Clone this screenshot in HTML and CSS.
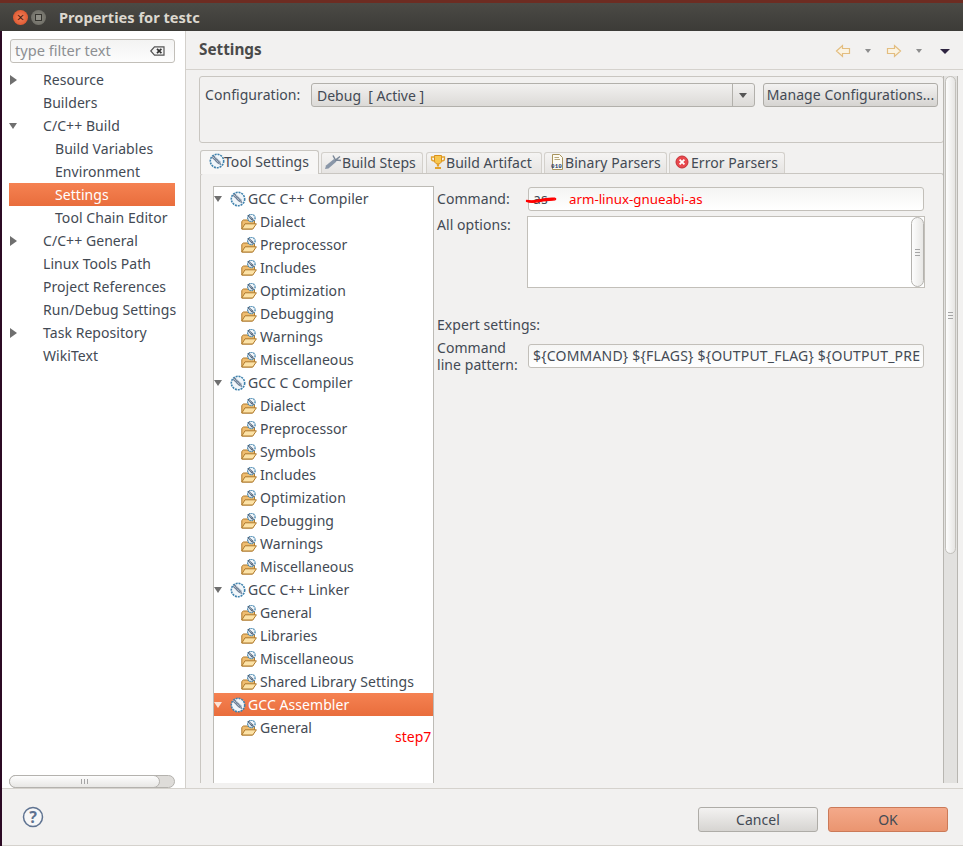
FILE: index.html
```html
<!DOCTYPE html>
<html lang="en">
<head>
<meta charset="utf-8">
<title>Properties for testc</title>
<link rel="stylesheet" href="styles.css">
</head>
<body>
<svg class="defs" width="0" height="0" aria-hidden="true">
  <symbol id="tool" viewBox="0 0 16 16">
    <circle cx="8" cy="8" r="6.7" fill="#f1f6fa"/>
    <circle cx="8" cy="8" r="6.7" fill="none" stroke="#3f82ad" stroke-width="1.6" stroke-dasharray="2 .9"/>
    <path d="M3.6 3.4 L5 2.6 L11 8.2 L12.4 12.2 L8.4 10.6 L3 5Z" fill="#6d7f96"/>
    <path d="M4 4 L10.6 10.4M6 3.8 L11 8.6M3.8 6 L8.6 10.6" stroke="#e3ebf2" stroke-width=".9" stroke-dasharray="1 1" fill="none"/>
  </symbol>
  <symbol id="folder" viewBox="0 0 16 16">
    <path d="M.8 15 V7.4 L2.4 6 H6 L13.5 6.6 V10 L11.5 15Z" fill="#efbd70" stroke="#b07a2c" stroke-width="1"/>
    <path d="M.8 15 L4 9.8 H15.4 L11.8 15Z" fill="#fce2a6" stroke="#b07a2c" stroke-width="1"/>
    <circle cx="10.4" cy="4" r="3.7" fill="#f1f6fa"/>
    <circle cx="10.4" cy="4" r="3.7" fill="none" stroke="#3f82ad" stroke-width="1.3" stroke-dasharray="1.4 .7"/>
    <path d="M6.4 1.4 L7.6 .8 L12 4.6 L13 7 L10.4 6.2Z" fill="#4f6279"/>
    <path d="M8 2.2 L11.4 5.4" stroke="#e3ebf2" stroke-width=".8" stroke-dasharray="1 .7" fill="none"/>
  </symbol>
  <symbol id="tip-left" viewBox="0 0 16 14">
    <path d="M1.5 7 L7.5 1.5 V4.5 H14.5 V9.5 H7.5 V12.5Z" fill="#fbf3e2" stroke="#e3bd7f" stroke-width="1.2"/>
  </symbol>
  <symbol id="tip-right" viewBox="0 0 16 14">
    <path d="M14.5 7 L8.5 1.5 V4.5 H1.5 V9.5 H8.5 V12.5Z" fill="#fbf3e2" stroke="#e3bd7f" stroke-width="1.2"/>
  </symbol>
</svg>

<div class="window">
  <header class="titlebar">
    <span class="wbtn close">×</span>
    <span class="wbtn max"><i></i></span>
    <span class="wtitle">Properties for testc</span>
  </header>

  <div class="main">
    <aside class="sidebar">
      <div class="filter">
        <span class="filter-text">type filter text</span>
        <svg class="filter-clear" width="15" height="10" viewBox="0 0 15 10"><path d="M.8 5 L4.5 .8 H14 V9.2 H4.5Z" fill="#f4f4f4" stroke="#555" stroke-width="1.2"/><path d="M7 2.8 L11.4 7.2M11.4 2.8 L7 7.2" stroke="#333" stroke-width="1.7"/></svg>
      </div>
      <ul class="navtree">
        <li class="nav l1"><span class="tw closed"></span>Resource</li>
        <li class="nav l1"><span class="tw none"></span>Builders</li>
        <li class="nav l1"><span class="tw open"></span>C/C++ Build</li>
        <li class="nav l2">Build Variables</li>
        <li class="nav l2">Environment</li>
        <li class="nav l2 sel">Settings</li>
        <li class="nav l2">Tool Chain Editor</li>
        <li class="nav l1"><span class="tw closed"></span>C/C++ General</li>
        <li class="nav l1"><span class="tw none"></span>Linux Tools Path</li>
        <li class="nav l1"><span class="tw none"></span>Project References</li>
        <li class="nav l1"><span class="tw none"></span>Run/Debug Settings</li>
        <li class="nav l1"><span class="tw closed"></span>Task Repository</li>
        <li class="nav l1"><span class="tw none"></span>WikiText</li>
      </ul>
      <div class="hscroll"><div class="hthumb"><span class="grip-h"></span></div></div>
    </aside>

    <section class="content">
      <div class="pagehead">
        <h1 class="pagetitle">Settings</h1>
        <div class="pagetools">
          <svg class="tip" width="16" height="14"><use href="#tip-left"/></svg>
          <span class="mini"></span>
          <svg class="tip" width="16" height="14"><use href="#tip-right"/></svg>
          <span class="mini"></span>
          <span class="viewmenu"></span>
        </div>
      </div>

      <div class="pagebody">
        <div class="scrollarea">
          <div class="configbox">
            <span class="configlabel">Configuration:</span>
            <div class="combo"><span class="combotext">Debug  [ Active ]</span><span class="comboarrow"></span></div>
            <button class="btn manage">Manage Configurations...</button>
          </div>

          <div class="tabs">
            <div class="tab active"><svg width="16" height="16"><use href="#tool"/></svg>Tool Settings</div>
            <div class="tab t2"><svg width="18" height="16" viewBox="0 0 18 16"><path d="M1 15 L2 11.5 L10 5 L12.5 7.5 L4.5 14.5Z" fill="#8a97a8"/><path d="M9 1.5 L11.5 6 L16 2.5M11.5 6 L17 6.5" stroke="#7a8798" stroke-width="1.5" fill="none"/></svg>Build Steps</div>
            <div class="tab t3"><svg width="16" height="16" viewBox="0 0 16 16"><path d="M4.5 1.5 H11.5 V7 C11.5 9 9.5 10 8 10 C6.5 10 4.5 9 4.5 7Z" fill="#f7c64f" stroke="#d98f1c"/><path d="M4.5 3 H1.5 V5 C1.5 6.5 3 7 4.5 7M11.5 3 H14.5 V5 C14.5 6.5 13 7 11.5 7" fill="none" stroke="#e2a12c" stroke-width="1.3"/><path d="M8 10 V12.5M5 14 H11" stroke="#e2a12c" stroke-width="2.2"/></svg>Build Artifact</div>
            <div class="tab t4"><svg width="15" height="16" viewBox="0 0 15 16"><path d="M2.5 .5 H9.5 L12.5 3.5 V15.5 H2.5Z" fill="#fdfbf2" stroke="#a8935c"/><path d="M4.5 3.5 H9M4.5 5.5 H10" stroke="#b7a77e"/><text class="bintext" x="1" y="14">010</text></svg>Binary Parsers</div>
            <div class="tab t5"><svg width="14" height="14" viewBox="0 0 14 14"><circle cx="7" cy="7" r="6" fill="#e8484d" stroke="#c62f35"/><path d="M4.6 4.6 L9.4 9.4M9.4 4.6 L4.6 9.4" stroke="#fff" stroke-width="1.8"/></svg>Error Parsers</div>
          </div>

          <div class="tabpane">
            <ul class="tooltree">
              <li class="row top"><span class="tw open"></span><svg width="16" height="16"><use href="#tool"/></svg>GCC C++ Compiler</li>
              <li class="row child"><svg width="16" height="16"><use href="#folder"/></svg>Dialect</li>
              <li class="row child"><svg width="16" height="16"><use href="#folder"/></svg>Preprocessor</li>
              <li class="row child"><svg width="16" height="16"><use href="#folder"/></svg>Includes</li>
              <li class="row child"><svg width="16" height="16"><use href="#folder"/></svg>Optimization</li>
              <li class="row child"><svg width="16" height="16"><use href="#folder"/></svg>Debugging</li>
              <li class="row child"><svg width="16" height="16"><use href="#folder"/></svg>Warnings</li>
              <li class="row child"><svg width="16" height="16"><use href="#folder"/></svg>Miscellaneous</li>
              <li class="row top"><span class="tw open"></span><svg width="16" height="16"><use href="#tool"/></svg>GCC C Compiler</li>
              <li class="row child"><svg width="16" height="16"><use href="#folder"/></svg>Dialect</li>
              <li class="row child"><svg width="16" height="16"><use href="#folder"/></svg>Preprocessor</li>
              <li class="row child"><svg width="16" height="16"><use href="#folder"/></svg>Symbols</li>
              <li class="row child"><svg width="16" height="16"><use href="#folder"/></svg>Includes</li>
              <li class="row child"><svg width="16" height="16"><use href="#folder"/></svg>Optimization</li>
              <li class="row child"><svg width="16" height="16"><use href="#folder"/></svg>Debugging</li>
              <li class="row child"><svg width="16" height="16"><use href="#folder"/></svg>Warnings</li>
              <li class="row child"><svg width="16" height="16"><use href="#folder"/></svg>Miscellaneous</li>
              <li class="row top"><span class="tw open"></span><svg width="16" height="16"><use href="#tool"/></svg>GCC C++ Linker</li>
              <li class="row child"><svg width="16" height="16"><use href="#folder"/></svg>General</li>
              <li class="row child"><svg width="16" height="16"><use href="#folder"/></svg>Libraries</li>
              <li class="row child"><svg width="16" height="16"><use href="#folder"/></svg>Miscellaneous</li>
              <li class="row child"><svg width="16" height="16"><use href="#folder"/></svg>Shared Library Settings</li>
              <li class="row top sel"><span class="tw open"></span><svg width="16" height="16"><use href="#tool"/></svg>GCC Assembler</li>
              <li class="row child"><svg width="16" height="16"><use href="#folder"/></svg>General</li>
              <li class="step">step7</li>
            </ul>

            <div class="form">
              <div class="field first">
                <span class="flabel">Command:</span>
                <div class="input cmd">as
                  <svg class="scribble" width="32" height="7" viewBox="0 0 32 7"><path d="M1.5 4.4 C6 5 10 4.8 14 3.8 C18 2.8 24 1.8 30 2.2 C31 2.6 31 3.6 30 3.8 C25 4.4 19 4.6 14 5.6 C9 6.6 4 6.4 1.5 5.4Z" fill="#f00" stroke="#f00" stroke-width="1.2" stroke-linejoin="round"/></svg>
                  <span class="note">arm-linux-gnueabi-as</span>
                </div>
              </div>
              <div class="field opts">
                <span class="flabel">All options:</span>
                <div class="textarea"><div class="tabar"><span class="grip-v"></span></div></div>
              </div>
              <div class="expert">Expert settings:</div>
              <div class="field pattern">
                <span class="flabel two">Command<br>line pattern:</span>
                <div class="input clip">${COMMAND} ${FLAGS} ${OUTPUT_FLAG} ${OUTPUT_PRE</div>
              </div>
            </div>
          </div>
        </div>
        <div class="vscroll"><div class="vthumb"><span class="grip-v"></span></div></div>
      </div>
    </section>
  </div>

  <footer class="footer">
    <svg class="help" width="22" height="22" viewBox="0 0 22 22"><circle cx="11" cy="11" r="9.5" fill="#f7f7f7" stroke="#5f7391" stroke-width="1.5"/><text class="helptext" x="11" y="16.5">?</text></svg>
    <div class="actions">
      <button class="btn action">Cancel</button>
      <button class="btn action ok">OK</button>
    </div>
  </footer>
</div>
</body>
</html>
```
FILE: styles.css
```css
* { box-sizing: border-box; }
html, body { margin: 0; padding: 0; }
body {
  width: 963px; height: 846px; overflow: hidden;
  background: #2c0a24;
  font-family: "Noto Sans", "Open Sans", sans-serif;
  font-size: 14px;
  letter-spacing: .06px;
  color: #434a54;
}
.defs { position: absolute; }
ul { list-style: none; margin: 0; padding: 0; }
.window { height: 846px; display: flex; flex-direction: column; margin-left: 2px; }

/* title bar */
.titlebar {
  height: 31px; flex: none; display: flex; align-items: center;
  background: linear-gradient(#4b4a45, #3c3b37);
  border-top: 3px solid #6d2c22;
  margin-left: -2px; padding-left: 13px;
}
.wbtn { width: 15px; height: 15px; border-radius: 50%; display: flex; align-items: center; justify-content: center; margin-right: 3px; }
.close { background: radial-gradient(#f08560, #d9481f); color: #4a1a0c; font-size: 13px; line-height: 15px; }
.max { background: radial-gradient(#8a8980, #66655e); }
.max i { width: 7px; height: 7px; border: 1px solid #35342f; display: block; background: #8f8e86; }
.wtitle { margin-left: 10px; font-weight: 700; font-size: 14.6px; letter-spacing: 0; color: #dcd8cf; }

.main { flex: 1; display: flex; min-height: 0; background: #f2f1f0; }

/* left navigation */
.sidebar { width: 184px; flex: none; display: flex; flex-direction: column; background: #fff; border-right: 1px solid #d3d0cb; padding: 8px 0 0 7px; }
.filter {
  width: 165px; height: 24px; margin-left: 1px; flex: none;
  display: flex; align-items: center; justify-content: space-between;
  padding: 0 9px 2px 4px;
  border: 1px solid #c2bfb9; border-radius: 3px;
  background: linear-gradient(#f3f3f2, #fdfdfd);
  color: #8d8f92;
}
.filter-text { font-size: 14.6px; letter-spacing: 0; }
.filter-clear { margin-top: 2px; }
.navtree { width: 166px; margin-top: 5px; flex: 1; }
.nav { height: 23px; line-height: 23px; white-space: nowrap; display: flex; align-items: center; }
.l2 { padding-left: 46px; }
.sel { background: linear-gradient(#f58252, #e96d3c); color: #fff; }
.tw { flex: none; display: block; width: 0; height: 0; }
.tw.none { width: 10px; margin-right: 24px; }
.tw.closed { border-left: 7px solid #6f6f6f; border-top: 5px solid transparent; border-bottom: 5px solid transparent; margin: 0 26px 0 1px; }
.tw.open { border-top: 6px solid #6f6f6f; border-left: 4px solid transparent; border-right: 4px solid transparent; margin-right: 26px; }
.hscroll { width: 166px; height: 13px; flex: none; background: #dedcd9; border: 1px solid #b4b2ae; border-radius: 7px; }
.hthumb { width: 151px; margin: -1px 0 0 -1px; height: 13px; background: linear-gradient(#fdfdfd, #e8e7e5); border: 1px solid #b4b2ae; border-radius: 7px; display: flex; align-items: center; justify-content: center; }
.grip-h { width: 7px; height: 5px; background: repeating-linear-gradient(90deg, #a5a5a5 0 1px, transparent 1px 3px); }
.grip-v { width: 5px; height: 7px; background: repeating-linear-gradient(#a5a5a5 0 1px, transparent 1px 3px); }

/* page */
.content { flex: 1; min-width: 0; display: flex; flex-direction: column; }
.pagehead { height: 39px; flex: none; border-bottom: 1px solid #d5d2cd; display: flex; align-items: center; justify-content: space-between; padding: 0 13px 3px 13px; }
.pagetitle { margin: 0; font-size: 15.3px; letter-spacing: 0; font-weight: 700; color: #4a4a4a; }
.pagetools { display: flex; align-items: center; margin-top: 5px; }
.tip { display: block; }
.mini { width: 0; height: 0; border-top: 4px solid #8d8d8d; border-left: 3px solid transparent; border-right: 3px solid transparent; margin: 0 15px 0 14px; }
.viewmenu { width: 0; height: 0; border-top: 5px solid #2e2440; border-left: 5px solid transparent; border-right: 5px solid transparent; margin-left: 3px; }

.pagebody { flex: 1; min-height: 0; display: flex; padding-top: 6px; }
.scrollarea { width: 758px; flex: none; padding-left: 13px; display: flex; flex-direction: column; }
.configbox { height: 67px; flex: none; border: 1px solid #c9c6c1; border-radius: 3px; display: flex; align-items: flex-start; padding: 6px 6px 0 5px; }
.configlabel { width: 106px; line-height: 24px; flex: none; }
.combo { width: 444px; height: 24px; flex: none; border: 1px solid #b2b0ab; border-radius: 3px; background: linear-gradient(#f2f1f0, #dcdad7); display: flex; align-items: center; justify-content: space-between; padding-left: 5px; letter-spacing: 0; }
.combotext { white-space: pre; }
.comboarrow { width: 22px; height: 100%; border-left: 1px solid #b2b0ab; position: relative; }
.comboarrow::after { content: ""; position: absolute; left: 6px; top: 9px; border-top: 5px solid #555; border-left: 4px solid transparent; border-right: 4px solid transparent; }
.btn { font: inherit; letter-spacing: inherit; color: inherit; cursor: default; border: 1px solid #aeaca7; border-radius: 3px; background: linear-gradient(#f3f2f1, #d6d4d1); padding: 0; }
.manage { width: 175px; height: 24px; margin-left: 8px; flex: none; white-space: nowrap; padding-bottom: 2px; }

/* tabs */
.tabs { display: flex; margin: 7px 0 0 1px; height: 23px; flex: none; align-items: flex-end; position: relative; z-index: 1; }
.tab { height: 21px; display: flex; align-items: center; white-space: nowrap; border: 1px solid #d3d0cb; border-bottom: 0; border-radius: 3px 3px 0 0; background: linear-gradient(#f5f4f3, #e6e4e2); margin-right: 2px; padding: 0 0 2px 3px; }
.tab svg { flex: none; }
.tab.active { height: 24px; width: 119px; background: #f7f6f5; margin-bottom: -1px; padding: 0 0 3px 8px; border-color: #c9c6c1; }
.tab.active svg { margin-right: -1px; }
.tab.t2 { width: 102px; padding-left: 2px; }
.tab.t3 { width: 116px; margin-left: 1px; }
.tab.t4 { width: 123px; padding-left: 5px; }
.tab.t5 { width: 116px; padding-left: 5px; }
.tab.t5 svg { margin-right: 2px; }
.bintext { font-size: 6px; font-weight: 700; fill: #1e3a6e; font-family: "Liberation Mono", monospace; }

.tabpane { flex: 1; min-height: 0; width: 744px; margin-left: 1px; margin-bottom: 5px; border: 1px solid #c9c6c1; border-bottom: 0; border-radius: 3px 3px 0 0; padding: 12px 0 0 12px; display: flex; }
.tooltree { width: 221px; flex: none; height: 100%; background: #fff; border: 1px solid #bdbbb6; border-bottom: 0; position: relative; }
.row { height: 23px; display: flex; align-items: center; white-space: nowrap; }
.row svg { flex: none; }
.top .tw.open { margin-right: 8px; }
.top svg { margin-right: 2px; }
.child { padding-left: 27px; }
.child svg { margin-right: 3px; }
.row.sel { color: #fff; }
.row.sel .tw.open { border-top-color: #fbe3d7; }
.step { position: absolute; left: 181px; top: 540px; color: #f00; letter-spacing: 0; }

/* form */
.form { flex: 1; min-width: 0; padding: 0 0 0 3px; display: flex; flex-direction: column; }
.field { display: flex; align-items: flex-start; }
.flabel { width: 91px; flex: none; line-height: 23px; }
.flabel.two { line-height: 17px; margin-top: -5px; }
.first { margin-top: 1px; }
.input { width: 396px; height: 24px; line-height: 22px; flex: none; border: 1px solid #c2bfb9; border-radius: 3px; background: linear-gradient(#f4f4f3, #fff); padding-left: 4px; position: relative; white-space: nowrap; }
.clip { overflow: hidden; background: linear-gradient(#f6f6f5, #fff); letter-spacing: .2px; }
.note { position: absolute; left: 40px; top: 0; color: #f00; font-size: 13.3px; letter-spacing: 0; }
.scribble { position: absolute; left: -4px; top: 8px; }
.opts { margin-top: 5px; }
.opts .flabel { line-height: 18px; }
.textarea { width: 398px; height: 72px; margin-left: -1px; flex: none; background: #fff; border: 1px solid #c2bfb9; display: flex; justify-content: flex-end; }
.tabar { width: 13px; height: 100%; background: linear-gradient(90deg, #fdfdfd, #e8e7e5); border: 1px solid #b4b2ae; border-radius: 7px; display: flex; align-items: center; justify-content: center; }
.expert { margin-top: 27px; line-height: 20px; }
.pattern { margin-top: 9px; }

.vscroll { width: 15px; flex: none; margin-bottom: 5px; border-left: 1px solid #b8b6b1; border-right: 1px solid #b8b6b1; background: #e2e1df; padding: 0 1px; margin-left: -1px; }
.vthumb { height: 478px; background: linear-gradient(90deg, #fdfdfd, #e6e5e3); border: 1px solid #c2c0bb; border-radius: 7px; display: flex; align-items: center; justify-content: center; }

/* footer */
.footer { height: 58px; flex: none; background: #f2f1f0; border-top: 1px solid #d5d2cd; border-bottom: 1px solid #d5d2cd; display: flex; align-items: center; justify-content: space-between; padding: 0 15px 0 20px; }
.help { display: block; }
.helptext { font-size: 16px; font-weight: 700; fill: #5f7391; text-anchor: middle; }
.actions { display: flex; gap: 10px; margin-top: 4px; }
.action { width: 120px; height: 25px; }
.ok { background: linear-gradient(#f4a98a, #ea9570); border-color: #cb7a58; }
```
